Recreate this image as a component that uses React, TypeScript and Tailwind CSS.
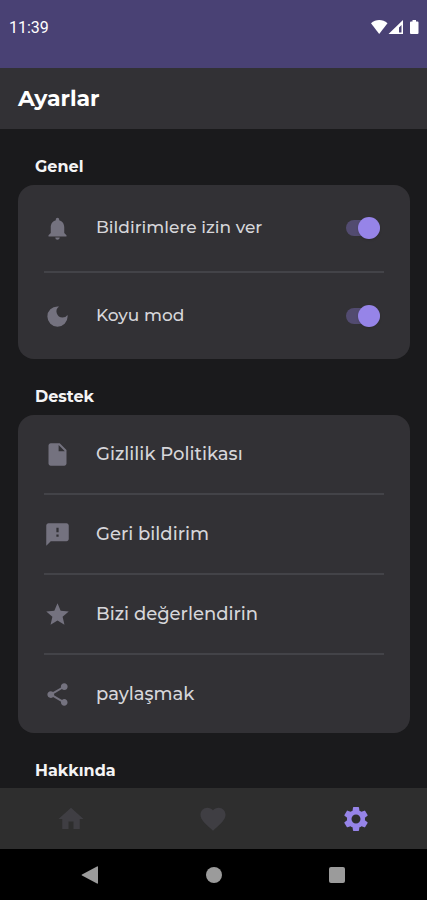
import React, { useState } from 'react';
import {
  MdDarkMode,
  MdFavorite,
  MdFeedback,
  MdHome,
  MdInsertDriveFile,
  MdNotifications,
  MdSettings,
  MdShare,
  MdStar,
} from 'react-icons/md';

const StatusBar = () => (
  <div className="flex h-[68px] shrink-0 items-start justify-between bg-[#494174] pt-4 pr-[7px] pl-[9px] text-white">
    <span className="font-[Roboto,sans-serif] text-base leading-6">11:39</span>
    <svg width="50" height="22" viewBox="0 0 50 22" fill="currentColor" aria-hidden="true">
      {/* Wifi */}
      <path d="M1 7.200C5.800 2.800 12.700 2.800 17.500 7.200L9.200 18Z" />
      {/* Signal */}
      <path fillRule="evenodd" d="M33 4V18H18.500ZM31.500 9L29 11.500V16.500H31.500Z" />
      {/* Battery */}
      <path d="M42.500 4H46V5.500H47.500Q48.500 5.500 48.500 6.500V17Q48.500 18 47.500 18H41Q40 18 40 17V6.500Q40 5.500 41 5.500H42.500Z" />
    </svg>
  </div>
);

const Section = ({ title, children }: { title: string; children?: React.ReactNode }) => (
  <section className="pr-[17px] pl-[18px]">
    <h2 className="px-[17px] pb-2 text-base leading-5 font-bold text-[#f4f4f5]">{title}</h2>
    {children && (
      <ul className="divide-y-2 divide-[#434348] rounded-2xl bg-[#323135] px-[26px]">{children}</ul>
    )}
  </section>
);

const ToggleRow = ({ icon, label }: { icon: React.ReactNode; label: string }) => {
  const [checked, setChecked] = useState(true);

  return (
    <li>
      <label className="flex h-[86px] items-center text-[17px] font-medium text-[#d6d6da]">
        <span className="flex w-[52px] text-[27px] text-[#74727f]">{icon}</span>
        <span className="flex-1">{label}</span>
        <input
          type="checkbox"
          role="switch"
          checked={checked}
          onChange={() => setChecked(!checked)}
          className="mr-1 flex h-4 w-[34px] appearance-none items-center rounded-full bg-[#524b70] before:size-[22px] before:shrink-0 before:rounded-full before:bg-[#77757f] before:shadow checked:justify-end checked:before:bg-[#9684e8]"
        />
      </label>
    </li>
  );
};

const LinkRow = ({ icon, label }: { icon: React.ReactNode; label: string }) => (
  <li>
    <a href="#" className="flex h-[78px] items-center text-lg font-medium text-[#d6d6da]">
      <span className="flex w-[52px] text-[27px] text-[#74727f]">{icon}</span>
      <span>{label}</span>
    </a>
  </li>
);

const TabBar = () => (
  <nav className="flex h-[61px] shrink-0 items-center bg-[#2e2e2e] text-[30px] text-[#3f3e43]">
    <a href="#" aria-label="Home" className="flex flex-1 justify-center">
      <MdHome />
    </a>
    <a href="#" aria-label="Favorites" className="flex flex-1 justify-center">
      <MdFavorite />
    </a>
    <a href="#" aria-label="Settings" className="flex flex-1 justify-center text-[#9684e8]">
      <MdSettings />
    </a>
  </nav>
);

const SystemBar = () => (
  <div className="flex h-[51px] shrink-0 items-center bg-black px-7 text-[#9b9b9b]">
    <button aria-label="Back" className="flex flex-1 justify-center">
      <svg width="18" height="18" viewBox="0 0 18 18" fill="currentColor">
        <path d="M17 1V17Q17 18 16 17.500L1 9.500Q0 9 1 8.500L16 .5Q17 0 17 1Z" />
      </svg>
    </button>
    <button aria-label="Overview" className="flex flex-1 justify-center">
      <span className="size-4 rounded-full bg-current" />
    </button>
    <button aria-label="Recent" className="flex flex-1 justify-center">
      <span className="size-4 rounded-xs bg-current" />
    </button>
  </div>
);

export default function App() {
  return (
    <div className="flex h-screen flex-col bg-[#1a1a1c] font-[Montserrat,Inter,sans-serif]">
      <StatusBar />
      <header className="flex h-[61px] shrink-0 items-center bg-[#323135] px-[18px]">
        <h1 className="text-[22px] font-bold text-white">Ayarlar</h1>
      </header>

      <main className="flex min-h-0 flex-1 flex-col gap-7 overflow-hidden pt-7">
        <Section title="Genel">
          <ToggleRow icon={<MdNotifications />} label="Bildirimlere izin ver" />
          <ToggleRow icon={<MdDarkMode />} label="Koyu mod" />
        </Section>
        <Section title="Destek">
          <LinkRow icon={<MdInsertDriveFile />} label="Gizlilik Politikası" />
          <LinkRow icon={<MdFeedback />} label="Geri bildirim" />
          <LinkRow icon={<MdStar />} label="Bizi değerlendirin" />
          <LinkRow icon={<MdShare />} label="paylaşmak" />
        </Section>
        <Section title="Hakkında" />
      </main>

      <TabBar />
      <SystemBar />
    </div>
  );
}
